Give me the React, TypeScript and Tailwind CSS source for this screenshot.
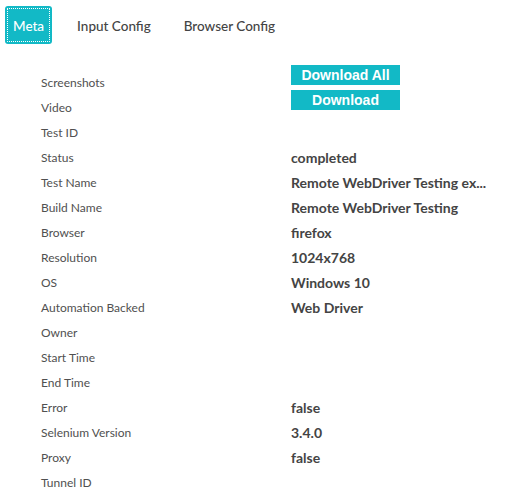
import React from 'react';

const rows: { label: string; value?: string; button?: string }[] = [
  { label: 'Screenshots', button: 'Download All' },
  { label: 'Video', button: 'Download' },
  { label: 'Test ID' },
  { label: 'Status', value: 'completed' },
  { label: 'Test Name', value: 'Remote WebDriver Testing ex...' },
  { label: 'Build Name', value: 'Remote WebDriver Testing' },
  { label: 'Browser', value: 'firefox' },
  { label: 'Resolution', value: '1024x768' },
  { label: 'OS', value: 'Windows 10' },
  { label: 'Automation Backed', value: 'Web Driver' },
  { label: 'Owner' },
  { label: 'Start Time' },
  { label: 'End Time' },
  { label: 'Error', value: 'false' },
  { label: 'Selenium Version', value: '3.4.0' },
  { label: 'Proxy', value: 'false' },
  { label: 'Tunnel ID' },
];

export default function App() {
  return (
    <div className="w-[506px] h-[504px] bg-white font-['Lato',sans-serif] overflow-hidden">
      <div className="flex items-center gap-[17px] pl-[5px] pt-[6px]">
        <div className="h-[38px] px-2 pt-[3px] flex items-center rounded-[3px] bg-[#12b9c6] text-white text-[13.5px] font-medium outline-1 outline-dotted outline-white outline-offset-[-3px]">
          Meta
        </div>
        <div className="h-[38px] px-2 pt-[3px] flex items-center text-[13.5px] font-medium text-[#444]">Input Config</div>
        <div className="h-[38px] px-2 pt-[3px] flex items-center text-[13.5px] font-medium text-[#444]">Browser Config</div>
      </div>

      <div className="pl-[41px] pt-[21px]">
        {rows.map((row) => (
          <div key={row.label} className="flex items-end h-[25px]">
            <div className="w-[250px] text-[12px] leading-[14px] text-[#505050]">{row.label}</div>
            {row.button ? (
              <button className="self-start w-[109px] h-[20px] bg-[#12b9c6] text-white text-[14px] font-bold leading-[20px] font-['Liberation_Sans',sans-serif]">
                {row.button}
              </button>
            ) : (
              <div className="w-[210px] whitespace-nowrap text-[14px] font-bold leading-[15px] text-[#444]">{row.value}</div>
            )}
          </div>
        ))}
      </div>
    </div>
  );
}
